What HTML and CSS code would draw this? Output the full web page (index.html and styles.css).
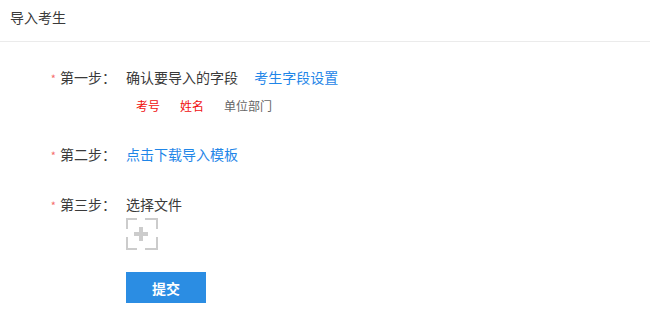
FILE: index.html
```html
<!DOCTYPE html>
<html lang="zh-CN">
  <head>
    <meta charset="UTF-8" />
    <meta name="viewport" content="width=device-width, initial-scale=1.0" />
    <title>导入考生</title>
    <link rel="stylesheet" href="styles.css">
  </head>

  <body>
    <div class="header">导入考生</div>

    <div class="form">
      <!-- step 1 -->
      <div class="row step-one">
        <div class="label"><span class="req">*</span>第一步：</div>
        <div class="content">
          <div class="line">
            确认要导入的字段
            <a class="link field-link" href="#">考生字段设置</a>
          </div>
          <div class="tags">
            <span class="tag required">考号</span>
            <span class="tag required">姓名</span>
            <span class="tag">单位部门</span>
          </div>
        </div>
      </div>

      <!-- step 2 -->
      <div class="row step-two">
        <div class="label"><span class="req">*</span>第二步：</div>
        <div class="content">
          <a class="link" href="#">点击下载导入模板</a>
        </div>
      </div>

      <!-- step 3 -->
      <div class="row step-three">
        <div class="label"><span class="req">*</span>第三步：</div>
        <div class="content">
          <div class="line">选择文件</div>
          <div class="upload">
            <svg width="32" height="32" viewBox="0 0 32 32">
              <path d="M1 11V1H11 M19 1H31V11 M31 19V31H19 M11 31H1V19"
                fill="none" stroke="#cccccc" stroke-width="2" />
              <rect x="8" y="14" width="14" height="4" fill="#cccccc" />
              <rect x="13" y="9" width="4" height="14" fill="#cccccc" />
            </svg>
          </div>
          <button class="submit">提交</button>
        </div>
      </div>
    </div>
  </body>
</html>
```

FILE: styles.css
```css
body {
  margin: 0;
  font-family: "Noto Sans CJK SC", "Noto Sans", sans-serif;
  font-size: 14px;
  color: #3a3a3a;
  background: #fff;
}

.header {
  height: 41px;
  line-height: 35px;
  padding: 0 10px;
  border-bottom: 1px solid #ebebeb;
}

.form {
  padding-top: 25px;
}

.row {
  display: grid;
  grid-template-columns: 116px 1fr;
  column-gap: 10px;
  line-height: 20px;
}

.step-two {
  margin-top: 28px;
}

.step-three {
  margin-top: 29px;
}

.label {
  text-align: right;
}

.req {
  color: #f56c6c;
  font-size: 11px;
  margin-right: 4px;
}

.link {
  color: #1f86e8;
  text-decoration: none;
}

.field-link {
  margin-left: 13px;
}

.tags {
  margin-top: 9px;
  padding-left: 10px;
  font-size: 12px;
  display: flex;
  gap: 20px;
}

.tag {
  color: #666;
}

.tag.required {
  color: #f01010;
}

.upload {
  margin-top: 4px;
  width: 32px;
  height: 32px;
}

.upload svg {
  display: block;
}

.submit {
  display: block;
  margin-top: 22px;
  width: 80px;
  height: 31px;
  border: none;
  background-color: #2b8de3;
  color: #fff;
  font-family: inherit;
  font-size: 14px;
  font-weight: bold;
  cursor: pointer;
}
```
